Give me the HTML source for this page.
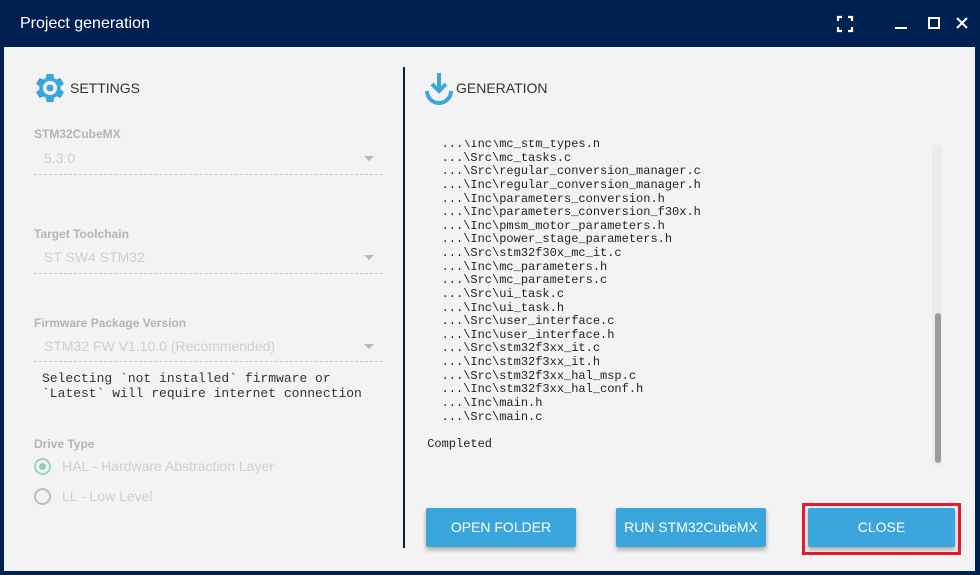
<!DOCTYPE html>
<html><head><style>
*{margin:0;padding:0;box-sizing:border-box}
body{width:980px;height:575px;background:#002052;position:relative;overflow:hidden;font-family:"Liberation Sans",sans-serif}
.t{position:absolute;white-space:nowrap}
#panel{position:absolute;left:4px;top:47px;width:971px;height:524px;background:#f3f3f3}
.lbl{font-size:12px;color:#b4b4b4;font-weight:bold}
.val{font-size:14px;color:#cfcfcf}
.line{position:absolute;left:34px;width:349px;border-top:1px dashed #a9cfe4}
.arr{position:absolute;left:364px;width:0;height:0;border-left:5px solid transparent;border-right:5px solid transparent;border-top:5px solid #b8b8b8}
.mono{font-family:"Liberation Mono",monospace;font-size:12px;color:#222}
.btn{position:absolute;top:508px;width:150px;height:39px;background:#3ba6db;color:#fff;font-size:14px;text-align:center;line-height:39px;border-radius:2px;box-shadow:0 3px 5px rgba(0,0,0,.3)}
</style></head><body>
<div class="t" style="left:20px;top:15px;color:#fff;font-size:16px">Project generation</div>
<svg style="position:absolute;left:835px;top:14px" width="150" height="20" viewBox="0 0 150 20">
<path d="M3 7V3H7M13 3H17V7M17 13V17H13M7 17H3V13" stroke="#fff" stroke-width="2.2" fill="none"/>
<path d="M60 14H72" stroke="#fff" stroke-width="2"/>
<rect x="94" y="4" width="10" height="10" stroke="#fff" stroke-width="2" fill="none"/>
<path d="M122 4L132 14M132 4L122 14" stroke="#fff" stroke-width="2"/>
</svg>
<div id="panel"></div>
<svg style="position:absolute;left:33px;top:71px" width="34" height="34" viewBox="0 0 24 24"><path fill="#3ba6db" d="M19.4 13c.04-.3.1-.66.1-1s-.06-.7-.1-1l2.1-1.650c.2-.15.25-.42.12-.64l-2-3.46c-.12-.22-.4-.3-.6-.22l-2.5 1c-.52-.4-1.06-.73-1.7-.98l-.37-2.65A.5.5 0 0 0 14 2h-4a.5.5 0 0 0-.5.42l-.37 2.65c-.63.25-1.17.59-1.7.98l-2.5-1c-.22-.08-.48 0-.6.22l-2 3.46c-.13.22-.07.49.12.64L4.570 11c-.04.34-.07.67-.07 1s.03.65.07.97l-2.11 1.66c-.19.15-.25.42-.12.64l2 3.46c.12.22.39.3.61.22l2.49-1.01c.52.4 1.06.74 1.69.99l.37 2.65c.04.24.25.42.5.42h4c.25 0 .46-.18.5-.42l.37-2.65c.63-.26 1.17-.59 1.69-.99l2.49 1.01c.22.08.49 0 .61-.22l2-3.46c.12-.22.07-.49-.12-.64zM12 17a5 5 0 1 1 0-10 5 5 0 0 1 0 10zm0-2.5a2.5 2.5 0 1 0 0-5 2.5 2.5 0 0 0 0 5z" fill-rule="evenodd"/></svg>
<div class="t" style="left:70px;top:80px;font-size:14px;color:#333">SETTINGS</div>
<div class="t lbl" style="left:34px;top:127px">STM32CubeMX</div>
<div class="t val" style="left:44px;top:150px">5.3.0</div><div class="arr" style="top:156px"></div>
<div class="line" style="top:174px"></div>
<div class="t lbl" style="left:34px;top:227px">Target Toolchain</div>
<div class="t val" style="left:44px;top:249px">ST SW4 STM32</div><div class="arr" style="top:255px"></div>
<div class="line" style="top:273px"></div>
<div class="t lbl" style="left:34px;top:316px">Firmware Package Version</div>
<div class="t val" style="left:44px;top:338px">STM32 FW V1.10.0 (Recommended)</div><div class="arr" style="top:344px"></div>
<div class="line" style="top:361px"></div>
<div class="t mono" style="left:42px;top:371px;color:#333;line-height:15px;font-size:13px">Selecting `not installed` firmware or<br>`Latest` will require internet connection</div>
<div class="t lbl" style="left:34px;top:437px">Drive Type</div>
<div style="position:absolute;left:34px;top:458px;width:17px;height:17px;border:2px solid #9fd3bd;border-radius:50%"><div style="margin:3px;width:7px;height:7px;border-radius:50%;background:#8fcfb3"></div></div>
<div class="t val" style="left:62px;top:458px">HAL - Hardware Abstraction Layer</div>
<div style="position:absolute;left:34px;top:488px;width:17px;height:17px;border:2px solid #bdbdbd;border-radius:50%"></div>
<div class="t val" style="left:62px;top:488px">LL - Low Level</div>
<div style="position:absolute;left:403px;top:67px;width:2px;height:481px;background:#002052"></div>
<svg style="position:absolute;left:424px;top:71px" width="30" height="34" viewBox="0 0 30 34"><path d="M15 2V20M8 13L15 20L22 13" stroke="#3ba6db" stroke-width="4" fill="none"/><path d="M3 20A12 12 0 0 0 27 20" stroke="#3ba6db" stroke-width="4" fill="none"/></svg>
<div class="t" style="left:456px;top:80px;font-size:14px;color:#333">GENERATION</div>
<div style="position:absolute;left:420px;top:140px;width:510px;height:320px;overflow:hidden">
<div class="mono" style="position:absolute;left:0;top:-2px;line-height:13.62px;white-space:pre">   ...\Inc\mc_stm_types.h
   ...\Src\mc_tasks.c
   ...\Src\regular_conversion_manager.c
   ...\Inc\regular_conversion_manager.h
   ...\Inc\parameters_conversion.h
   ...\Inc\parameters_conversion_f30x.h
   ...\Inc\pmsm_motor_parameters.h
   ...\Inc\power_stage_parameters.h
   ...\Src\stm32f30x_mc_it.c
   ...\Inc\mc_parameters.h
   ...\Src\mc_parameters.c
   ...\Src\ui_task.c
   ...\Inc\ui_task.h
   ...\Src\user_interface.c
   ...\Inc\user_interface.h
   ...\Src\stm32f3xx_it.c
   ...\Inc\stm32f3xx_it.h
   ...\Src\stm32f3xx_hal_msp.c
   ...\Inc\stm32f3xx_hal_conf.h
   ...\Inc\main.h
   ...\Src\main.c

 Completed</div></div>
<div style="position:absolute;left:932px;top:145px;width:10px;height:320px;background:#ebebeb"></div>
<div style="position:absolute;left:935px;top:313px;width:6px;height:150px;background:#9a9a9a;border-radius:3px"></div>
<div class="btn" style="left:426px">OPEN FOLDER</div>
<div class="btn" style="left:616px">RUN STM32CubeMX</div>
<div style="position:absolute;left:802px;top:503px;width:159px;height:52px;border:3px solid #e8192c"></div>
<div class="btn" style="left:808px;width:147px">CLOSE</div>
</body></html>
